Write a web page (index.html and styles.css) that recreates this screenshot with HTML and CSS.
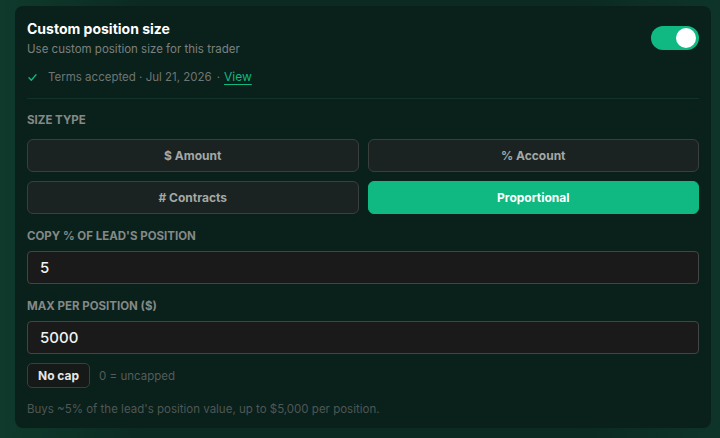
FILE: index.html
```html
<!DOCTYPE html>
<html lang="en">
<head>
<meta charset="utf-8">
<link rel="stylesheet" href="styles.css">
</head>
<body>
<div class="card">
  <div class="head">
    <div class="head-text">
      <div class="title">Custom position size</div>
      <div class="subtitle">Use custom position size for this trader</div>
      <div class="terms">
        <svg class="check" width="9" height="9" viewBox="0 0 9 9"><path d="M1 4.8 L3.3 7.2 L8 1.8" fill="none" stroke="#10b981" stroke-width="1.3" stroke-linecap="round" stroke-linejoin="round"/></svg>
        <span>Terms accepted · Jul 21, 2026</span>
        <span class="dot">·</span>
        <a class="view">View</a>
      </div>
    </div>
    <div class="toggle"><div class="knob"></div></div>
  </div>
  <div class="divider"></div>
  <div class="label label-size">SIZE TYPE</div>
  <div class="grid">
    <div class="opt">$ Amount</div>
    <div class="opt">% Account</div>
    <div class="opt"># Contracts</div>
    <div class="opt active">Proportional</div>
  </div>
  <div class="label">COPY % OF LEAD'S POSITION</div>
  <div class="input">5</div>
  <div class="label">MAX PER POSITION ($)</div>
  <div class="input">5000</div>
  <div class="cap-row">
    <div class="nocap">No cap</div>
    <span class="hint">0 = uncapped</span>
  </div>
  <div class="foot">Buys ~5% of the lead's position value, up to $5,000 per position.</div>
</div>
</body>
</html>
```
FILE: styles.css
```css
* { box-sizing: border-box; }
html, body { margin: 0; padding: 0; }
body {
  width: 720px;
  height: 438px;
  background: linear-gradient(90deg, #0f3a2c 0%, #0b2a21 20%, #0b2a21 80%, #0e3429 100%);
  font-family: Inter, "Noto Sans", sans-serif;
  padding: 6px 9px 0 15px;
  overflow: hidden;
}
.card {
  width: 696px;
  height: 422px;
  background: #0a201b;
  border-radius: 8px;
  padding: 15px 12px 0 12px;
}
.head {
  display: flex;
  justify-content: space-between;
  align-items: flex-start;
}
.title {
  color: #ffffff;
  font-weight: 700;
  font-size: 14px;
  line-height: 16px;
}
.subtitle {
  margin-top: 4px;
  color: #7b817f;
  font-size: 11.5px;
  line-height: 16px;
}
.terms {
  margin-top: 12px;
  display: flex;
  align-items: center;
  color: #6f7573;
  font-size: 11.5px;
  line-height: 16px;
}
.check { margin: 0 11px 0 1px; }
.dot { margin: 0 4px 0 5px; }
.view {
  color: #10b981;
  font-size: 12px;
  text-decoration: underline;
  text-underline-offset: 3px;
}
.toggle {
  margin-top: 5px;
  width: 48px;
  height: 24px;
  border-radius: 12px;
  background: #10b981;
  display: flex;
  justify-content: flex-end;
  align-items: center;
  padding: 2px 3px;
}
.knob {
  width: 20px;
  height: 20px;
  border-radius: 50%;
  background: #fff;
}
.divider {
  height: 1px;
  background: #123327;
  margin-top: 13px;
}
.label {
  color: #848987;
  font-size: 11.5px;
  font-weight: 700;
  line-height: 14px;
  margin-top: 15px;
  margin-bottom: 8px;
}
.label-size { margin-top: 14px; margin-bottom: 12px; }
.grid {
  display: grid;
  grid-template-columns: 1fr 1fr;
  gap: 9px;
}
.opt {
  height: 33px;
  border: 1px solid #3a3f3d;
  border-radius: 6px;
  background: #1a2321;
  color: #a4a8a6;
  font-weight: 700;
  font-size: 12px;
  display: flex;
  align-items: center;
  justify-content: center;
}
.opt.active {
  background: #10b981;
  border-color: #10b981;
  color: #ffffff;
}
.input {
  height: 33px;
  border: 1px solid #424544;
  border-radius: 4px;
  background: #1a1a1a;
  color: #f2f2f2;
  font-size: 15px;
  font-weight: 500;
  display: flex;
  align-items: center;
  padding-left: 12px;
}
.cap-row {
  margin-top: 9px;
  display: flex;
  align-items: center;
}
.nocap {
  height: 25px;
  padding: 0 10px;
  border: 1px solid #3a3f3d;
  border-radius: 5px;
  background: #151a19;
  color: #e6e6e6;
  font-weight: 700;
  font-size: 12px;
  display: flex;
  align-items: center;
}
.hint {
  margin-left: 9px;
  color: #555c59;
  font-size: 11.5px;
}
.foot {
  margin-top: 14px;
  color: #4f5754;
  font-size: 11.5px;
  line-height: 14px;
}
```
